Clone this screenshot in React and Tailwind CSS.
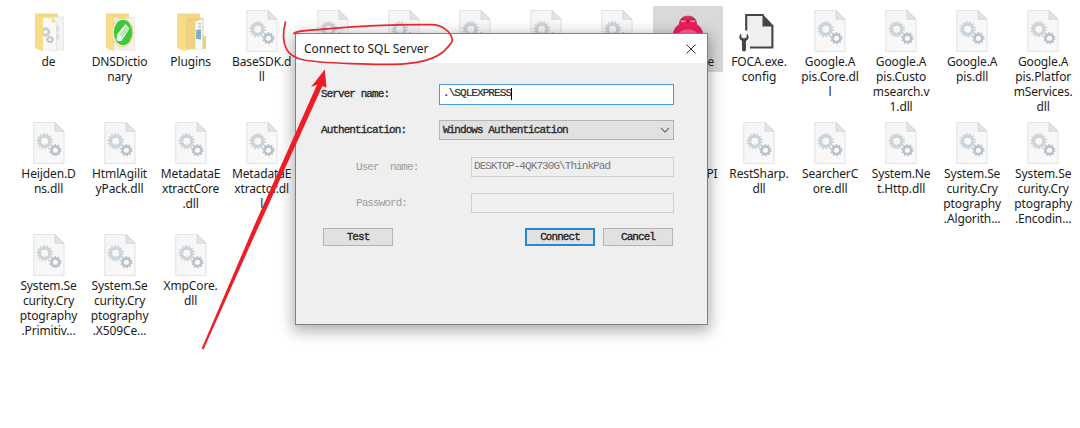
const FILES = [
  { kind: 'folderGears', lines: ['de'] },
  { kind: 'folderGreen', lines: ['DNSDictio', 'nary'] },
  { kind: 'folderPlugins', lines: ['Plugins'] },
  { kind: 'dll', lines: ['BaseSDK.d', 'll'] },
  { kind: 'dll', lines: [] },
  { kind: 'dll', lines: [] },
  { kind: 'dll', lines: [] },
  { kind: 'dll', lines: [] },
  { kind: 'dll', lines: [] },
  { kind: 'foca', lines: ['FOCA.exe'], selected: true },
  { kind: 'config', lines: ['FOCA.exe.', 'config'] },
  { kind: 'dll', lines: ['Google.A', 'pis.Core.dl', 'l'] },
  { kind: 'dll', lines: ['Google.A', 'pis.Custo', 'msearch.v', '1.dll'] },
  { kind: 'dll', lines: ['Google.A', 'pis.dll'] },
  { kind: 'dll', lines: ['Google.A', 'pis.Platfor', 'mServices.', 'dll'] },

  { kind: 'dll', lines: ['Heijden.D', 'ns.dll'] },
  { kind: 'dll', lines: ['HtmlAgilit', 'yPack.dll'] },
  { kind: 'dll', lines: ['MetadataE', 'xtractCore', '.dll'] },
  { kind: 'dll', lines: ['MetadataE', 'xtractor.dl', 'l'] },
  { kind: 'dll', lines: [] },
  { kind: 'dll', lines: [] },
  { kind: 'dll', lines: [] },
  { kind: 'dll', lines: [] },
  { kind: 'dll', lines: [] },
  { kind: 'dll', lines: ['PluginsAPI'] },
  { kind: 'dll', lines: ['RestSharp.', 'dll'] },
  { kind: 'dll', lines: ['SearcherC', 'ore.dll'] },
  { kind: 'dll', lines: ['System.Ne', 't.Http.dll'] },
  { kind: 'dll', lines: ['System.Se', 'curity.Cry', 'ptography', '.Algorith...'] },
  { kind: 'dll', lines: ['System.Se', 'curity.Cry', 'ptography', '.Encodin...'] },

  { kind: 'dll', lines: ['System.Se', 'curity.Cry', 'ptography', '.Primitiv...'] },
  { kind: 'dll', lines: ['System.Se', 'curity.Cry', 'ptography', '.X509Ce...'] },
  { kind: 'dll', lines: ['XmpCore.', 'dll'] },
];

function Gear({ cx, cy, r, teeth, color }) {
  const ring = r - 0.9;
  const dash = (Math.PI * ring) / teeth;
  return (
    <g fill="none" stroke={color}>
      <circle cx={cx} cy={cy} r={r * 0.62} strokeWidth={r * 0.4} />
      <circle cx={cx} cy={cy} r={ring} strokeWidth="1.9" strokeDasharray={`${dash} ${dash}`} />
    </g>
  );
}

function DllIcon() {
  return (
    <svg width="48" height="46" viewBox="0 0 48 46">
      <defs>
        <linearGradient id="page" x1="0" y1="0" x2="1" y2="1">
          <stop offset="0" stopColor="#f5f5f5" />
          <stop offset="1" stopColor="#fafafb" />
        </linearGradient>
      </defs>
      <path d="M8.8 2.5h21.2l9 8.7v32.3H8.800z" fill="url(#page)" stroke="#dfe0e1" strokeWidth="0.9" />
      <path d="M30 2.500v8.700h9z" fill="#e3e4e4" stroke="#cdcfd0" strokeWidth="0.7" />
      <Gear cx={19.7} cy={21.3} r={8.2} teeth={14} color="#cbd4da" />
      <Gear cx={30.4} cy={30.2} r={6.1} teeth={10} color="#b8c2c8" />
    </svg>
  );
}

function FolderBase({ children }) {
  return (
    <svg width="48" height="46" viewBox="0 0 48 46">
      <path d="M10 5.500h23v34H14z" fill="#f6d784" />
      {children}
    </svg>
  );
}

function FolderGears() {
  return (
    <FolderBase>
      <path d="M28 9h10.500v33H28z" fill="#f3f3f2" stroke="#dedede" strokeWidth="0.6" />
      <path d="M17.500 9.500h9.500l4.500 5v29l-14 -3z" fill="#f9f9f8" stroke="#dedede" strokeWidth="0.6" />
      <path d="M27 9.500v5h4z" fill="#f4d98d" />
      <Gear cx={20.500} cy={24} r={5} teeth={9} color="#c4ccd1" />
      <Gear cx={25} cy={31.500} r={3.800} teeth={7} color="#b9c3c9" />
      <path d="M32.500 18.500v14" stroke="#cfd5d9" strokeWidth="2" strokeDasharray="5 3" />
      <path d="M10 5.500l8 4v34L10 40z" fill="#fadc87" />
    </FolderBase>
  );
}

function FolderGreen() {
  return (
    <FolderBase>
      <path d="M18 9.500h20.500v33L18 41z" fill="#f4f3f0" stroke="#dedbd2" strokeWidth="0.6" />
      <ellipse cx="26.500" cy="24.500" rx="10.500" ry="14.500" fill="#f7f2e4" stroke="#efcf79" strokeWidth="1" />
      <ellipse cx="27" cy="24.500" rx="9.200" ry="12.800" fill="#3bc93b" />
      <path d="M21.500 26.500l8-10 3.500 4-7.800 12.300-4.200-.6z" fill="#e9f9e6" stroke="#fff" strokeWidth="0.8" strokeLinejoin="round" />
      <path d="M24 27.500l6.500-8.500M25.500 29l6-8" stroke="#3bc93b" strokeWidth="0.7" />
      <path d="M10 5.500l8 4v5.500c-2 6-2 14 0 20v8.500L10 40z" fill="#fadc87" />
    </FolderBase>
  );
}

function FolderPlugins() {
  return (
    <FolderBase>
      <path d="M20 10h16.500v18h2.500v13H20z" fill="#f1d07a" />
      <path d="M27 14l8.500-3v30.500H27z" fill="#f8fafb" stroke="#ddd" strokeWidth="0.5" />
      <path d="M32.500 15v17" stroke="#b8c6d1" strokeWidth="3" strokeDasharray="1.500 1.500" />
      <path d="M29 22h5v9h-5z" fill="#4f91ba" opacity="0.65" />
      <path d="M18.500 11l10 3v27l-10 1z" fill="#f0d285" />
      <path d="M10 5.500l8.500 5v33L10 40z" fill="#fadc87" />
    </FolderBase>
  );
}

function FocaIcon() {
  return (
    <svg width="48" height="46" viewBox="0 0 48 46">
      <path d="M24 8.200c6.500 0 8.300 3.700 8.600 8.200 4 2.500 6 6 6 11v10H9.400V27.400c0-5 2-8.500 6-11 .3-4.500 2.100-8.200 8.600-8.200z" fill="#f31c5d" stroke="#a8204a" strokeWidth="0.7" />
      <path d="M14.500 26c1-6 18-6 19 0v9h-19z" fill="#f9648f" />
      <path d="M17 13h4.500M26.500 13h4.500" stroke="#e8d6dc" strokeWidth="1.300" />
      <path d="M17 11.900h5M26 11.900h5" stroke="#7d1635" strokeWidth="0.800" />
      <path d="M22.600 12.500h2.800l-1.400 3.500z" fill="#8d1638" />
    </svg>
  );
}

function ConfigIcon() {
  return (
    <svg width="48" height="46" viewBox="0 0 48 46">
      <path d="M11.500 7h17l9 10v22.500h-26z" fill="#efeff1" />
      <path d="M11.200 22.500V7h17.500M37.400 17v22.500H15" fill="none" stroke="#454545" strokeWidth="2.100" />
      <path d="M27.500 6l10.900 11.500v1H27.500z" fill="#454545" />
      <path
        d="M6.300 25.500c-1.800 1.200-2.300 3-1.900 4.600.4 1.300 1.300 2.200 2.600 2.800v8.600a2 2 0 0 0 4 0v-8.600c1.300-.6 2.200-1.500 2.600-2.800.4-1.600-.1-3.400-1.900-4.600v3.700L9 30.500l-2.700-1.300z"
        fill="#454545"
        stroke="#fff"
        strokeWidth="2.800"
        paintOrder="stroke"
      />
    </svg>
  );
}

const ICONS = {
  dll: DllIcon,
  folderGears: FolderGears,
  folderGreen: FolderGreen,
  folderPlugins: FolderPlugins,
  foca: FocaIcon,
  config: ConfigIcon,
};

function FileItem({ kind, lines, selected }) {
  const Icon = ICONS[kind];
  return (
    <div className="flex flex-col items-center">
      <div className={selected ? 'flex h-[66px] w-[70px] flex-col items-center bg-[#d9d9d9] pt-[2px]' : 'flex flex-col items-center pt-[2px]'}>
        <Icon />
        <div className="text-center text-[12px] leading-[15.100px] tracking-[-0.120px] whitespace-nowrap text-[#1c1c1c]">
          {lines.map((line, i) => (
            <div key={i}>{line}</div>
          ))}
        </div>
      </div>
    </div>
  );
}

const MONO = "font-['Liberation_Mono',monospace] text-[11px] tracking-[-0.930px] whitespace-pre";
const STRONG = '[-webkit-text-stroke:0.35px_currentColor]';

function Button({ children, primary }) {
  return (
    <button
      className={`${MONO} ${STRONG} flex h-[18px] w-[70px] items-center justify-center bg-[#e1e1e1] pt-px text-[#262626] ${primary ? 'border-2 border-[#2388d8]' : 'border border-[#b4b4b4]'}`}
    >
      {children}
    </button>
  );
}

function Dialog() {
  return (
    <div className="absolute top-[33px] left-[295px] flex h-[292px] w-[413px] flex-col border border-[#808080] bg-[#efefef] shadow-[0_4px_14px_2px_rgba(0,0,0,0.32)]">
      <div className="flex h-[29px] items-center justify-between bg-white pr-[11px] pl-2">
        <span className="text-[12px] tracking-[-0.070px] text-[#1a1a1a]">Connect to SQL Server</span>
        <svg width="10" height="10" viewBox="0 0 10 10" stroke="#333" strokeWidth="1">
          <path d="M0.500 0.500l9 9M9.500 0.500l-9 9" />
        </svg>
      </div>
      <div className={`${MONO} flex flex-col pt-[21px] pr-[33px] pl-[25px] text-[#2c2c2c]`}>
        <div className="flex h-[21px] items-center justify-between">
          <span className={STRONG}>Server name:</span>
          <div className="flex h-[21px] w-[235px] items-center border border-[#4a9be0] bg-white px-[3px] pb-[2px]">
            <span className="[-webkit-text-stroke:0.2px_currentColor]">.\SQLEXPRESS</span>
            <span className="h-3 w-px bg-black" />
          </div>
        </div>
        <div className="mt-[15px] flex h-5 items-center justify-between">
          <span className={STRONG}>Authentication:</span>
          <div className={`${STRONG} flex h-5 w-[235px] items-center justify-between border border-[#b4b4b4] bg-[#e1e1e1] pr-[3px] pl-[3px]`}>
            <span>Windows Authentication</span>
            <svg width="10" height="6" viewBox="0 0 10 6" fill="none" stroke="#777" strokeWidth="1.300">
              <path d="M1 1l4 4 4-4" />
            </svg>
          </div>
        </div>
        <div className="mt-[17px] flex h-5 items-center justify-between pl-[35px]">
          <span className="text-[#9e9e9e]">User  name:</span>
          <div className="flex h-5 w-[203px] items-center border border-[#cfcfcf] px-[2px] pb-[2px] text-[#777]">
            DESKTOP-4QK730G\ThinkPad
          </div>
        </div>
        <div className="mt-4 flex h-5 items-center justify-between pl-[35px]">
          <span className="text-[#9e9e9e]">Password:</span>
          <div className="h-5 w-[203px] border border-[#cfcfcf]" />
        </div>
        <div className="mt-[15px] flex items-center pr-px pl-[2px]">
          <Button>Test</Button>
          <div className="ml-auto flex gap-2">
            <Button primary>Connect</Button>
            <Button>Cancel</Button>
          </div>
        </div>
      </div>
    </div>
  );
}

function Annotation() {
  return (
    <svg className="pointer-events-none absolute top-0 left-0" width="1080" height="428" viewBox="0 0 1080 428">
      <path
        d="M285.500 22C283 31 282.500 42 287 50C290 55 294 58 304 60C325 63.500 350 63.500 374 64.300C405 65 430 63 443 52C449 46 452.500 43 452.300 40C451 31 441 24.500 431 24.700C405 24.500 365 25.500 330 28.700C312 30 296 30.500 294 33.500"
        fill="none"
        stroke="#ea2630"
        strokeWidth="1.700"
        strokeLinecap="round"
        strokeLinejoin="round"
      />
      <path d="M324.800 69.500L311 87L317 84.800L254.500 225L201.700 348.500L203.500 349.500L259.300 225L322.400 86L326.500 87.800Z" fill="#ee1c24" />
    </svg>
  );
}

export default function App() {
  return (
    <div className="relative h-[428px] w-[1080px] overflow-hidden bg-white font-['Noto_Sans',sans-serif]">
      <div className="grid grid-cols-[repeat(15,71.050px)] auto-rows-[112px] pt-[6px] pl-[13px]">
        {FILES.map((file, i) => (
          <FileItem key={i} {...file} />
        ))}
      </div>
      <Dialog />
      <Annotation />
    </div>
  );
}
